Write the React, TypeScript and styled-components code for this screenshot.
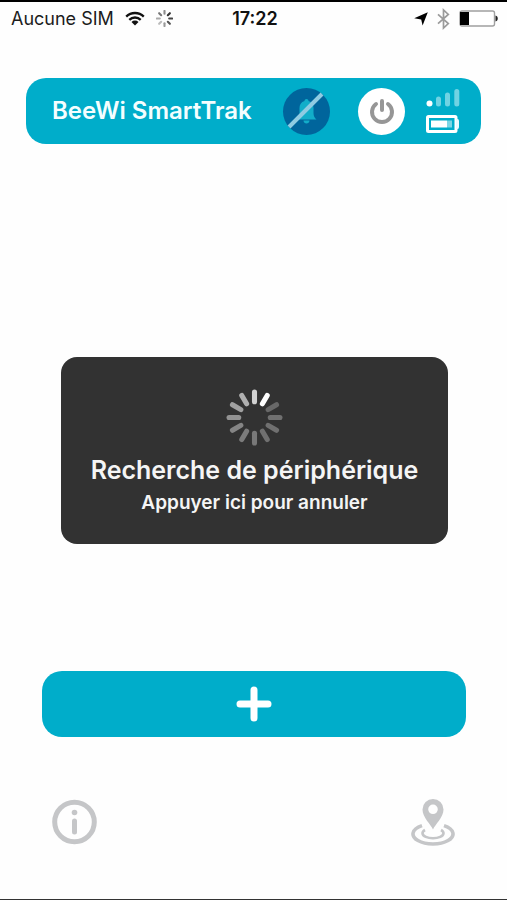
import React from "react";
import styled, { createGlobalStyle } from "styled-components";

const GlobalStyle = createGlobalStyle`
  *, *::before, *::after { box-sizing: border-box; }
  body { margin: 0; background: #fefefe; font-family: Inter, "Liberation Sans", sans-serif; }
  button { font: inherit; border: 0; padding: 0; cursor: pointer; }
  svg { display: block; flex: none; }
`;

const Screen = styled.div`
  display: flex;
  flex-direction: column;
  min-height: 100vh;
  border-top: 2px solid #000;
  border-bottom: 1px solid #333;
`;

const StatusBar = styled.div`
  display: grid;
  grid-template-columns: 1fr auto 1fr;
  align-items: center;
  height: 33px;
  padding: 0 8px 0 11px;
  color: #1c1c1c;
  font-size: 18px;
  line-height: 24px;
`;

const StatusGroup = styled.div<{ $end?: boolean }>`
  display: flex;
  align-items: center;
  gap: ${(p) => (p.$end ? "9px" : "11px")};
  justify-content: ${(p) => (p.$end ? "flex-end" : "flex-start")};
  white-space: nowrap;
`;

const Clock = styled.time`
  font-weight: 600;
  color: #111;
`;

const DeviceBar = styled.header`
  display: flex;
  align-items: center;
  height: 66px;
  margin: 43px 26px 0;
  padding: 0 21px 0 26px;
  border-radius: 20px;
  background: #00adca;
`;

const DeviceName = styled.h1`
  flex: 1;
  margin: 0;
  color: #f4feff;
  font-size: 24px;
  line-height: 32px;
  font-weight: 600;
  white-space: nowrap;
`;

const DeviceActions = styled.div`
  display: flex;
  align-items: center;
  gap: 28px;
`;

const RoundButton = styled.button<{ $color: string }>`
  display: grid;
  place-items: center;
  width: 47px;
  height: 47px;
  border-radius: 50%;
  background: ${(p) => p.$color};
`;

const Levels = styled.div`
  display: grid;
  gap: 7px;
  margin-left: 21px;
`;

const Content = styled.main`
  flex: 1;
`;

const AddButton = styled.button`
  display: grid;
  place-items: center;
  height: 66px;
  margin: 0 41px 0 42px;
  border-radius: 20px;
  background: #00adca;
`;

const Footer = styled.footer`
  display: flex;
  align-items: center;
  justify-content: space-between;
  height: 162px;
  padding: 8px 51px 0;
`;

const IconButton = styled.button`
  background: none;
  color: #c5c6c8;
`;

const Overlay = styled.div`
  position: fixed;
  inset: 0;
  display: grid;
  align-items: center;
  padding: 0 59px 0 61px;
`;

const SearchCard = styled.button`
  display: flex;
  flex-direction: column;
  align-items: center;
  padding: 32px 16px 28px;
  border-radius: 16px;
  background: #323232;
  color: #f5f5f5;
  white-space: nowrap;
`;

const SearchTitle = styled.span`
  margin-top: 8px;
  font-size: 25px;
  line-height: 32px;
  font-weight: 600;
`;

const SearchHint = styled.span`
  margin-top: 4px;
  font-size: 19px;
  line-height: 26px;
  font-weight: 600;
`;

const darkSpokes = ["#8c8c8c", "#333", "#444", "#555", "#999", "#bbb", "#aaa", "#777"];
const lightSpokes = ["#d2d2d2", "#fff", "#686868", "#707070", "#707070", "#707070", "#787878", "#7c7c7c", "#858585", "#929292", "#a0a0a0", "#b0b0b0"];

function Spinner({ size, colors, width = 5 }: { size: number; colors: string[]; width?: number }) {
  const step = 360 / colors.length;
  return (
    <svg width={size} height={size} viewBox="0 0 56 56" aria-hidden="true">
      {colors.map((c, i) => (
        <path key={i} d="M28 3v9.5" stroke={c} strokeWidth={width} strokeLinecap="round" transform={`rotate(${i * step} 28 28)`} />
      ))}
    </svg>
  );
}

export default function App() {
  return (
    <>
      <GlobalStyle />
      <Screen>
        <StatusBar>
          <StatusGroup>
            <span>Aucune SIM</span>
            <svg width="20" height="15" viewBox="0 0 20 15" aria-label="Wi-Fi">
              <path d="M1.2 5.6a12.6 12.6 0 0 1 17.6 0M4.3 8.8a8.2 8.2 0 0 1 11.4 0" fill="none" stroke="#111" strokeWidth="2.3" />
              <path d="M10 14.6 6.5 11a5 5 0 0 1 7 0z" fill="#111" />
            </svg>
            <Spinner size={17} colors={darkSpokes} width={7} />
          </StatusGroup>
          <Clock>17:22</Clock>
          <StatusGroup $end>
            <svg width="14" height="14" viewBox="0 0 14 14" aria-label="Localisation">
              <path d="M13.8.2 8.6 13.6 7.2 7.4.2 6.2z" fill="#000" />
            </svg>
            <svg width="13" height="22" viewBox="0 0 13 22" aria-label="Bluetooth">
              <path d="M1 6.3 11.3 15.5 6.5 20V2l4.8 4.5L1 15.7" fill="none" stroke="#9b9b9b" strokeWidth="1.7" />
            </svg>
            <svg width="40" height="17" viewBox="0 0 40 17" aria-label="Batterie faible">
              <rect x="1" y="1" width="34.5" height="15" rx="2" fill="#fff" stroke="#a0a0a0" strokeWidth="1.4" />
              <path d="M1 2h9v13H1z" fill="#000" />
              <path d="M36.5 5.5c3 .5 3 5.5 0 6z" fill="#222" />
            </svg>
          </StatusGroup>
        </StatusBar>

        <DeviceBar>
          <DeviceName>BeeWi SmartTrak</DeviceName>
          <DeviceActions>
            <RoundButton $color="#00659c" aria-label="Alarme désactivée">
              <svg width="47" height="47" viewBox="0 0 47 47">
                <path d="M23.5 11c1.5 0 2 1 2 2 3.500 1 5 3.700 5 7v5c0 3 1 4.700 3 6.500H13.500c2-1.800 3-3.500 3-6.500v-5c0-3.300 1.500-6 5-7 0-1 .5-2 2-2zM20.500 32.500h6c0 4-6 4-6 0z" fill="#12adc9" />
                <path d="M6 39 39 6" stroke="#8fcbe2" strokeWidth="4" />
              </svg>
            </RoundButton>
            <RoundButton $color="#fff" aria-label="Marche / arrêt">
              <svg width="26" height="26" viewBox="0 0 26 26" fill="none" stroke="#969696" strokeWidth="4" strokeLinecap="round">
                <path d="M7 6a10 10 0 1 0 12 0M13 3v9" />
              </svg>
            </RoundButton>
          </DeviceActions>
          <Levels>
            <svg width="34" height="19" viewBox="0 0 34 19" aria-label="Signal">
              <circle cx="3.5" cy="14.5" r="3" fill="#fff" />
              <path d="M12.5 10v5M21.5 6v9M30.8 2.500v12.500" stroke="#70d3e3" strokeWidth="5" strokeLinecap="round" />
            </svg>
            <svg width="34" height="18" viewBox="0 0 34 18" aria-label="Batterie">
              <rect x="1.5" y="1.5" width="28.5" height="15" rx="1" fill="none" stroke="#fff" strokeWidth="3" />
              <path d="M30 4h1.5q1.500 0 1.500 2v6q0 2-1.500 2H30z" fill="#e8fbff" />
              <path d="M5 5.500h16v7H5z" fill="#fff" />
              <path d="M21 5.500h5v7h-5z" fill="#7cd6e5" />
            </svg>
          </Levels>
        </DeviceBar>

        <Content />

        <AddButton aria-label="Ajouter">
          <svg width="36" height="36" viewBox="0 0 36 36">
            <path d="M18 4v28M4 18h28" stroke="#fff" strokeWidth="7" strokeLinecap="round" />
          </svg>
        </AddButton>

        <Footer>
          <IconButton aria-label="Informations">
            <svg width="46" height="46" viewBox="0 0 46 46" fill="none" stroke="currentColor">
              <circle cx="23.5" cy="23" r="19.8" strokeWidth="5" />
              <path d="M23.5 22v11" strokeWidth="5" strokeLinecap="round" />
              <circle cx="23.5" cy="13.5" r="2.8" fill="currentColor" stroke="none" />
            </svg>
          </IconButton>
          <IconButton aria-label="Localiser">
            <svg width="46" height="48" viewBox="0 0 46 48" fill="none" stroke="currentColor">
              <path d="M23 31.500c-2-5-10.500-12-10.500-20a10.500 10.500 0 0 1 21 0c0 8-8.500 15-10.500 20zM23 6.500a4.800 4.800 0 1 0 0 9.600 4.800 4.800 0 0 0 0-9.600z" fill="currentColor" stroke="none" fillRule="evenodd" />
              <path d="M15 32a10.500 5 0 1 0 16 0" strokeWidth="2.600" />
              <path d="M12 27.600a20 10 0 1 0 22 0" strokeWidth="3.600" />
            </svg>
          </IconButton>
        </Footer>
      </Screen>

      <Overlay>
        <SearchCard>
          <Spinner size={57} colors={lightSpokes} />
          <SearchTitle>Recherche de périphérique</SearchTitle>
          <SearchHint>Appuyer ici pour annuler</SearchHint>
        </SearchCard>
      </Overlay>
    </>
  );
}
